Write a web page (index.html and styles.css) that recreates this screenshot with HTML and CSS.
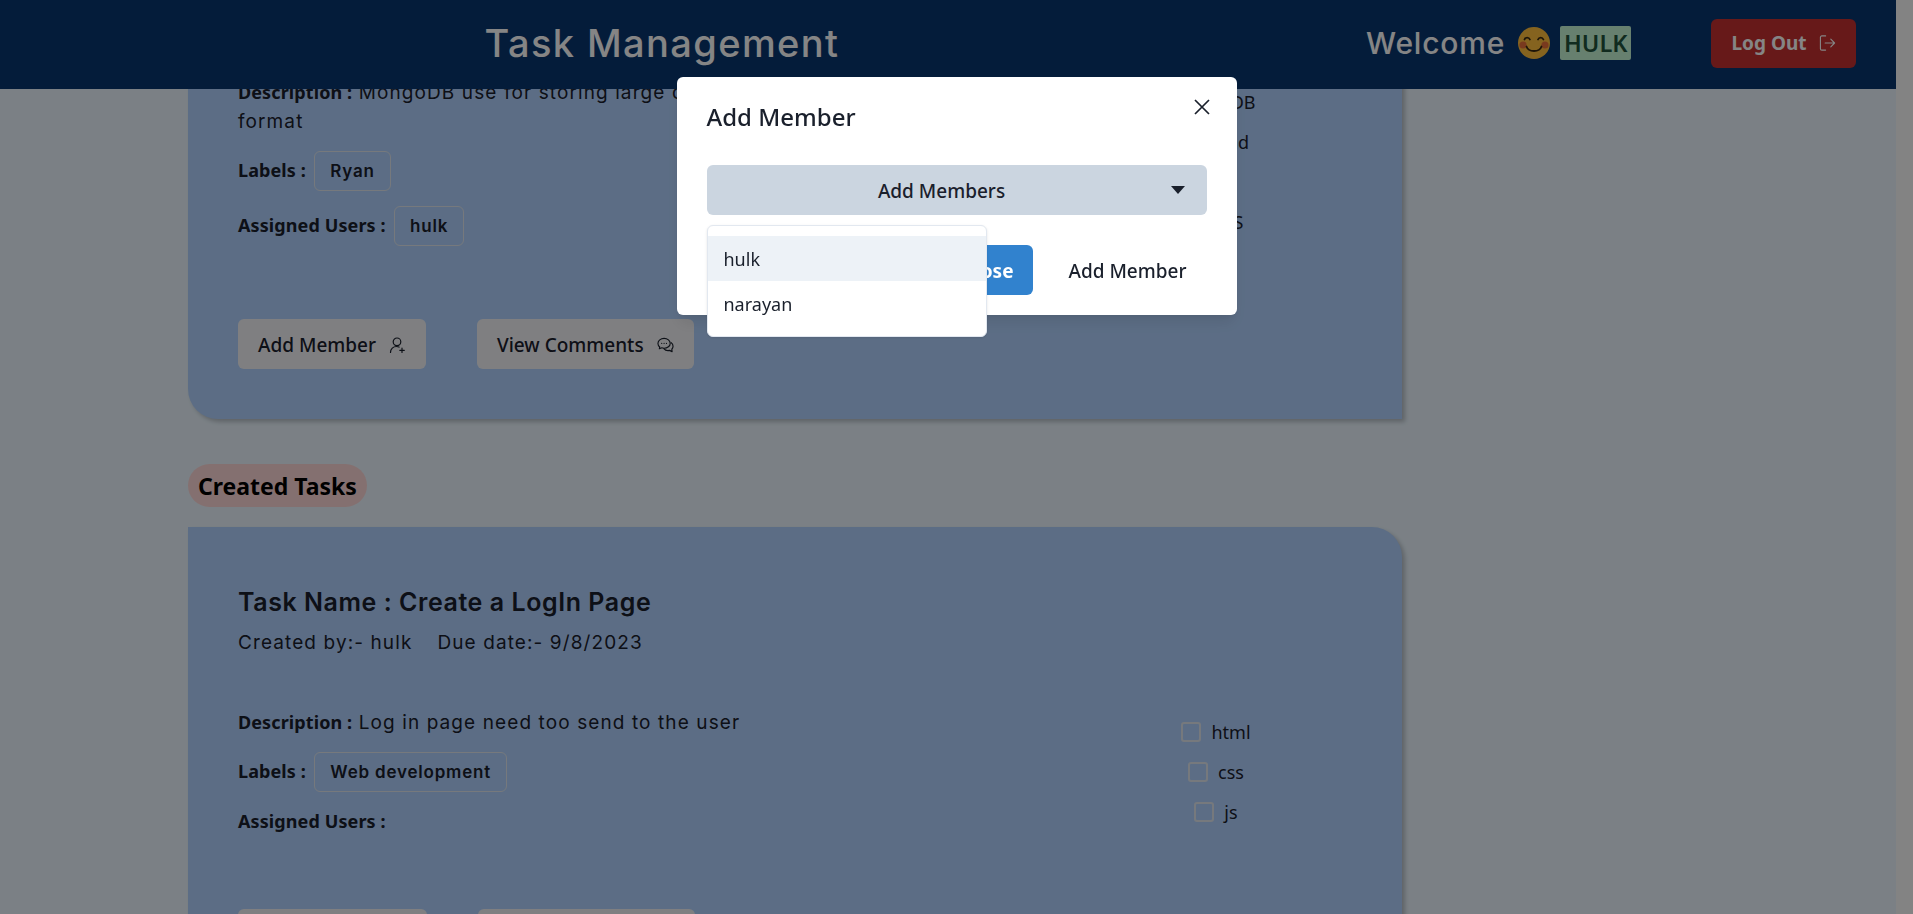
FILE: index.html
```html
<!DOCTYPE html>
<html lang="en">
<head>
    <meta charset="UTF-8">
    <meta name="viewport" content="width=device-width, initial-scale=1.0">
    <title>Task Management</title>
    <link rel="stylesheet" href="styles.css">
</head>
<body>
    <div class="page">
        <header class="topbar">
            <h1 class="brand">Task Management</h1>
            <div class="topbar-right">
                <div class="welcome">
                    <span>Welcome</span>
                    <svg class="emoji" viewBox="0 0 32 32" aria-hidden="true">
                        <circle cx="16" cy="16" r="16" fill="#ffbe3c"/>
                        <circle cx="5" cy="18" r="3.6" fill="#e8703a"/>
                        <circle cx="27" cy="18" r="3.6" fill="#e8703a"/>
                        <path d="M6.5 12.5c1-2.6 4.4-2.6 5.4 0M20 12.5c1-2.6 4.4-2.6 5.4 0" fill="none" stroke="#3a2a10" stroke-width="1.8" stroke-linecap="round"/>
                        <path d="M8.5 19.5c2 6 13 6 15 0" fill="none" stroke="#3a2a10" stroke-width="1.8" stroke-linecap="round"/>
                    </svg>
                    <span class="badge">HULK</span>
                </div>
                <button class="logout">
                    Log Out
                    <svg class="icon" viewBox="0 0 18 18" aria-hidden="true">
                        <path d="M7 1.5H3a1.5 1.5 0 0 0-1.5 1.5v12A1.5 1.5 0 0 0 3 16.500h4M6.500 9h10M12.500 5l4 4-4 4"/>
                    </svg>
                </button>
            </div>
        </header>

        <main class="tasks">
            <section class="card card-scrolled">
                <div class="task-body">
                    <div class="task-info">
                        <p class="row"><b>Description :</b> MongoDB use for storing large data in a document JSON format</p>
                        <p class="row"><b>Labels :</b> <span class="chip">Ryan</span></p>
                        <p class="row"><b>Assigned Users :</b> <span class="chip">hulk</span></p>
                    </div>
                    <ul class="checks">
                        <li><span class="box"></span>MongoDB</li>
                        <li><span class="box"></span>Backend</li>
                        <li><span class="box"></span>API</li>
                        <li><span class="box"></span>NodeJS</li>
                    </ul>
                </div>
                <div class="task-actions">
                    <button class="action">Add Member
                        <svg class="icon" viewBox="0 0 16 16" aria-hidden="true">
                            <circle cx="7.500" cy="4.800" r="3.800"/>
                            <path d="M1 15.500c0-3.600 2.700-6 6-6 1 0 1.800.2 2.500.6M12.500 11v4.500M10.300 13.300h4.500"/>
                        </svg>
                    </button>
                    <button class="action">View Comments
                        <svg class="icon" viewBox="0 0 18 16" aria-hidden="true">
                            <path d="M7.500 1C3.900 1 1 3.300 1 6.300c0 1.500.7 2.800 1.900 3.800L2.500 12l2.600-1c.8.300 1.600.4 2.400.4 3.600 0 6.500-2.300 6.500-5.100S11.100 1 7.500 1z"/>
                            <path d="M15 5.500c1.300 1 2 2.300 2 3.800 0 1.200-.5 2.300-1.300 3.200l.3 2.500-2.800-1.300c-2.300.5-4.700-.3-6-1.900"/>
                            <path d="M5 6.300h.01M7.500 6.300h.01M10 6.300h.01"/>
                        </svg>
                    </button>
                </div>
            </section>

            <h2 class="section-title">Created Tasks</h2>

            <section class="card">
                <h3 class="task-name">Task Name : Create a LogIn Page</h3>
                <p class="task-meta"><span>Created by:- hulk</span><span>Due date:- 9/8/2023</span></p>
                <div class="task-body">
                    <div class="task-info">
                        <p class="row"><b>Description :</b> Log in page need too send to the user</p>
                        <p class="row"><b>Labels :</b> <span class="chip">Web development</span></p>
                        <p class="row"><b>Assigned Users :</b></p>
                    </div>
                    <ul class="checks">
                        <li><span class="box"></span>html</li>
                        <li><span class="box"></span>css</li>
                        <li><span class="box"></span>js</li>
                    </ul>
                </div>
                <div class="task-actions">
                    <button class="action" aria-label="Add Member"></button>
                    <button class="action action-wide" aria-label="View Comments"></button>
                </div>
            </section>
        </main>
    </div>
    <div class="scrollbar"></div>

    <div class="overlay">
        <div class="modal">
            <button class="modal-close" aria-label="Close">
                <svg viewBox="0 0 16 16" aria-hidden="true"><path d="M1 1l14 14M15 1L1 15"/></svg>
            </button>
            <h2 class="modal-title">Add Member</h2>
            <div class="dropdown">
                <button class="dropdown-toggle">
                    <span>Add Members</span>
                    <svg class="caret" viewBox="0 0 14 8" aria-hidden="true"><path d="M0 0h14L7 8z"/></svg>
                </button>
                <ul class="dropdown-menu">
                    <li class="active">hulk</li>
                    <li>narayan</li>
                </ul>
            </div>
            <div class="modal-footer">
                <button class="btn-close">Close</button>
                <button class="btn-ghost">Add Member</button>
            </div>
        </div>
    </div>
</body>
</html>
```

FILE: styles.css
```css
* {
    box-sizing: border-box;
}
body {
    margin: 0;
    height: 100vh;
    display: flex;
    overflow: hidden;
    background-color: #ebf6ff;
    color: #1a202c;
    font-family: "Noto Sans", "Open Sans", sans-serif;
    font-size: 18px;
}
button {
    font-family: inherit;
    border: none;
    cursor: pointer;
}
ul {
    list-style: none;
    margin: 0;
    padding: 0;
}
.page {
    flex: 1;
    min-width: 0;
    overflow: hidden;
}
.scrollbar {
    width: 17px;
    background-color: #fcfcfc;
}

/* header */
.topbar {
    position: relative;
    z-index: 2;
    height: 89px;
    display: flex;
    align-items: center;
    padding-bottom: 3px;
    background-color: #083670;
    color: white;
}
.brand {
    width: 1324px;
    margin: 0;
    text-align: center;
    font-family: Inter, sans-serif;
    font-size: 38px;
    font-weight: 500;
    letter-spacing: 1.4px;
}
.topbar-right {
    flex: 1;
    display: flex;
    justify-content: space-between;
    align-items: center;
    padding: 0 40px 0 42px;
}
.welcome {
    display: flex;
    align-items: center;
    font-family: Inter, sans-serif;
    font-size: 30px;
    font-weight: 500;
    letter-spacing: 0.8px;
}
.emoji {
    width: 32px;
    height: 32px;
    margin: 0 10px 0 13px;
}
.badge {
    padding: 0 4px;
    border-radius: 2px;
    background-color: #c6f6d5;
    color: #22543d;
    font-family: "Noto Sans", sans-serif;
    font-size: 23.5px;
    font-weight: 600;
    letter-spacing: 0;
    line-height: 34px;
}
.icon {
    width: 17px;
    height: 16px;
    fill: none;
    stroke: currentColor;
    stroke-width: 1.2;
    stroke-linecap: round;
    stroke-linejoin: round;
}
.logout {
    height: 49px;
    width: 145px;
    display: flex;
    justify-content: center;
    align-items: center;
    gap: 12px;
    padding-top: 1px;
    border-radius: 6px;
    background-color: #c53030;
    color: white;
    font-size: 19px;
    font-weight: 700;
}
.logout .icon {
    height: 18px;
}

/* task cards */
.tasks {
    margin: -60px 0 0 188px;
    width: 1214px;
}
.card {
    padding: 57px 50px 50px;
    border-radius: 0 30px 0 30px;
    background-color: #b1d2ff;
    box-shadow: 3px 3px 4px rgba(0, 0, 0, 0.22);
}
/* first card is scrolled under the header, only its lower part shows */
.card-scrolled {
    padding-top: 49px;
}
.card-scrolled .checks {
    margin-right: 29px;
}
.task-name {
    margin: 0 0 8px;
    font-family: Inter, sans-serif;
    font-size: 25px;
    font-weight: 600;
    letter-spacing: 0.55px;
    line-height: 36px;
}
.task-meta {
    display: flex;
    gap: 25px;
    margin: 0 0 51px;
    font-family: Inter, sans-serif;
    font-size: 19px;
    letter-spacing: 1.1px;
    line-height: 29px;
}
.task-body {
    display: flex;
    justify-content: space-between;
}
.task-info {
    width: 720px;
    display: flex;
    flex-direction: column;
    gap: 15px;
}
.row {
    margin: 0;
    font-family: Inter, sans-serif;
    font-size: 19px;
    letter-spacing: 1.1px;
    line-height: 29px;
}
.row b {
    font-family: "Noto Sans", sans-serif;
    font-size: 18px;
    font-weight: 700;
    letter-spacing: 0.1px;
}
.chip {
    display: inline-block;
    margin-left: 2px;
    padding: 0 15px;
    border: 1px solid #e2e8f0;
    border-radius: 6px;
    font-size: 17px;
    font-weight: 600;
    letter-spacing: 0.8px;
    line-height: 38px;
}
.checks {
    width: 250px;
    margin: 9px 11px 0 0;
    display: flex;
    flex-direction: column;
    align-items: center;
    gap: 10px;
}
.checks li {
    display: flex;
    align-items: center;
    gap: 10px;
    line-height: 30px;
}
.box {
    width: 20px;
    height: 20px;
    border: 2px solid #e2e8f0;
    border-radius: 3px;
}
.task-actions {
    display: flex;
    gap: 51px;
    margin-top: 73px;
}
.action {
    height: 50px;
    padding: 1px 20px 0;
    display: flex;
    align-items: center;
    gap: 13px;
    border-radius: 6px;
    background-color: #f4f4f8;
    color: #1a202c;
    font-size: 19px;
    font-weight: 500;
}
/* bottom row is cut by the window, only the top of the buttons shows */
.action:empty {
    width: 189px;
}
.action-wide:empty {
    width: 217px;
}
.section-title {
    width: fit-content;
    margin: 45px 0 20px;
    padding: 2px 10px 0;
    border-radius: 22px;
    background-color: #fed7d7;
    color: black;
    font-size: 23px;
    font-weight: 700;
    line-height: 41px;
}

/* modal */
.overlay {
    position: fixed;
    inset: 0;
    z-index: 5;
    display: flex;
    justify-content: center;
    align-items: flex-start;
    padding-top: 77px;
    background-color: rgba(0, 0, 0, 0.48);
}
.modal {
    position: relative;
    width: 560px;
    padding: 22px 30px 20px;
    border-radius: 6px;
    background-color: white;
    box-shadow: 0 10px 15px -3px rgba(0, 0, 0, 0.1), 0 4px 6px -2px rgba(0, 0, 0, 0.05);
}
.modal-close {
    position: absolute;
    top: 22px;
    right: 27px;
    width: 16px;
    height: 16px;
    padding: 0;
    background: none;
}
.modal-close svg {
    display: block;
    fill: none;
    stroke: #1a202c;
    stroke-width: 1.7;
}
.modal-title {
    margin: 0 0 30px;
    font-size: 24px;
    font-weight: 500;
    line-height: 36px;
}
.dropdown {
    position: relative;
}
.dropdown-toggle {
    position: relative;
    width: 100%;
    height: 50px;
    padding: 2px 50px 0 20px;
    border-radius: 6px;
    background-color: #cbd5e0;
    color: #1a202c;
    font-size: 19px;
    font-weight: 500;
    text-align: center;
}
.caret {
    position: absolute;
    top: 21px;
    right: 22px;
    width: 14px;
    height: 8px;
    fill: #1a202c;
}
.dropdown-menu {
    position: absolute;
    top: 60px;
    left: 0;
    z-index: 1;
    width: 280px;
    padding: 10px 0;
    border: 1px solid #e2e8f0;
    border-radius: 6px;
    background-color: white;
    box-shadow: 0 1px 3px rgba(0, 0, 0, 0.1);
}
.dropdown-menu li {
    padding: 1px 16px 0;
    height: 45px;
    line-height: 45px;
}
.dropdown-menu .active {
    background-color: #edf2f7;
}
.modal-footer {
    display: flex;
    justify-content: flex-end;
    gap: 15px;
    margin-top: 30px;
}
.btn-close,
.btn-ghost {
    height: 50px;
    padding: 2px 20px 0;
    border-radius: 6px;
    font-size: 19px;
}
.btn-close {
    background-color: #3182ce;
    color: white;
    font-weight: 700;
}
.btn-ghost {
    background: none;
    color: #1a202c;
    font-weight: 500;
}
```
